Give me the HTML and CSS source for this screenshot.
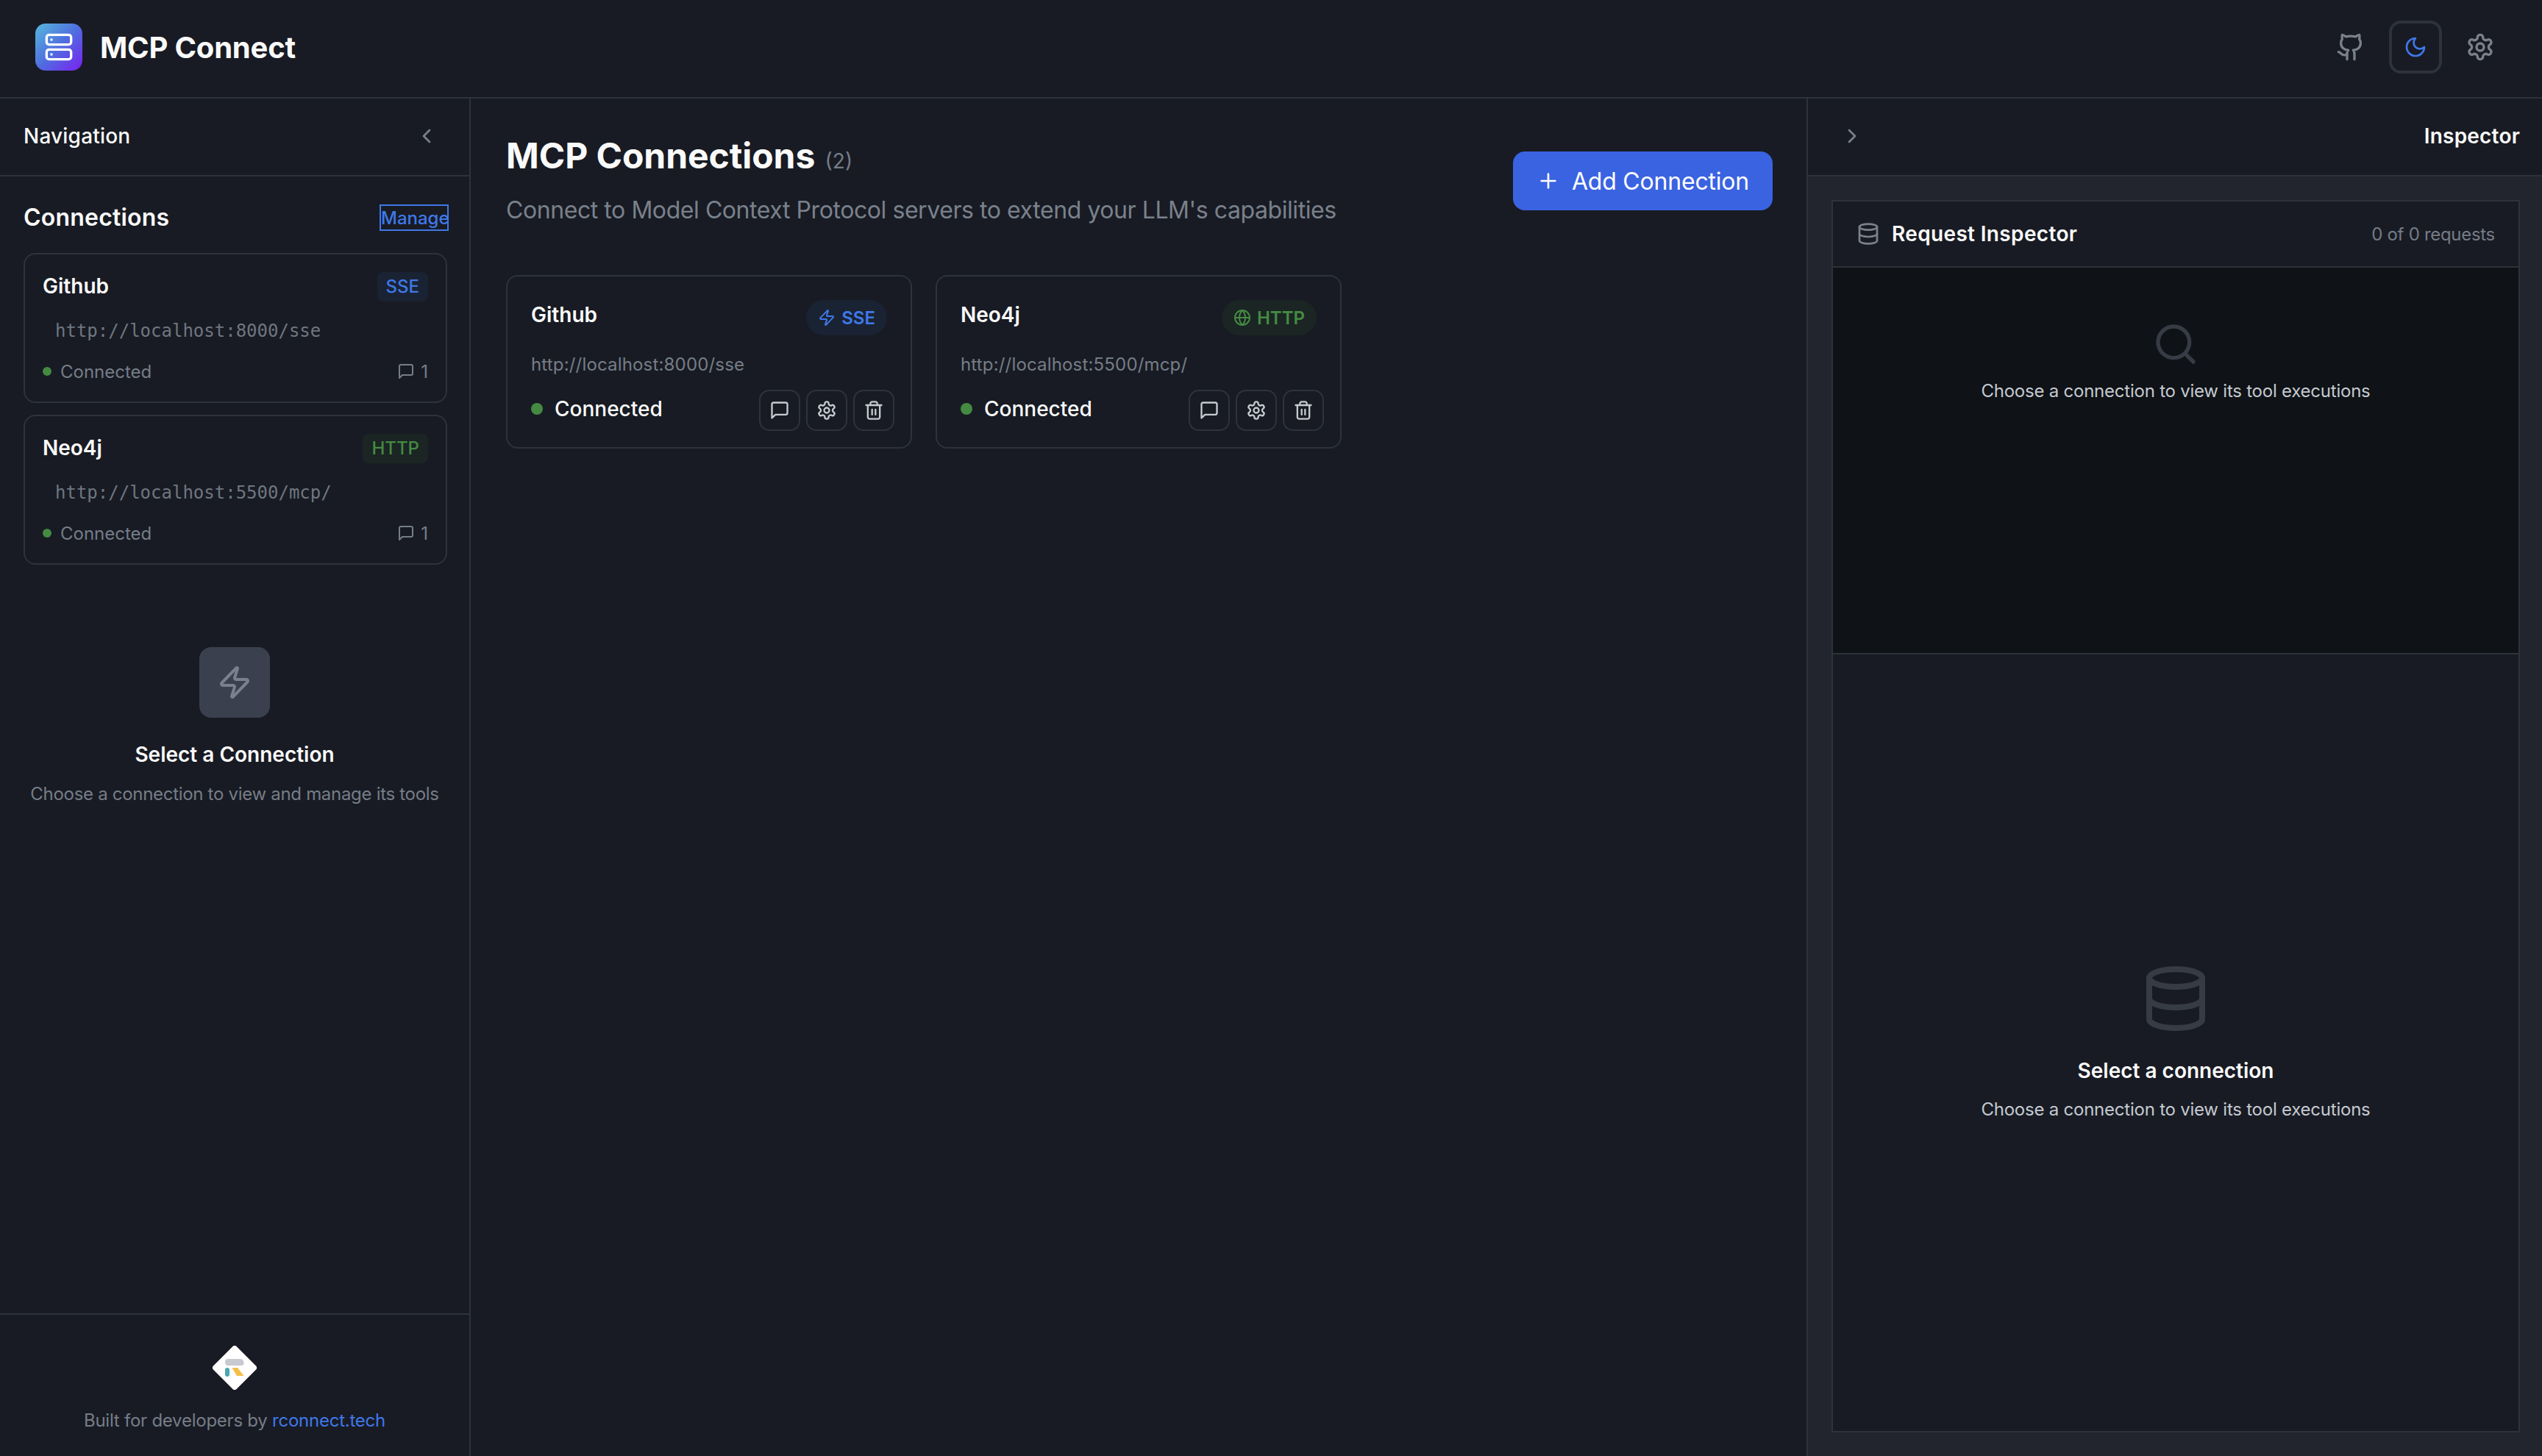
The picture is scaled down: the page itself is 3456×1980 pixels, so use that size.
FILE: index.html
```html
<!DOCTYPE html>
<html lang="en">
<head>
  <meta charset="UTF-8" />
  <meta name="viewport" content="width=device-width, initial-scale=1" />
  <title>MCP Connect</title>
  <link rel="stylesheet" href="styles.css">
</head>
<body>

<svg class="sprite" xmlns="http://www.w3.org/2000/svg">
  <symbol id="i-server" viewBox="0 0 24 24"><rect x="2" y="2" width="20" height="8" rx="2"/><rect x="2" y="14" width="20" height="8" rx="2"/><line x1="6" y1="6" x2="6.01" y2="6"/><line x1="6" y1="18" x2="6.01" y2="18"/></symbol>
  <symbol id="i-github" viewBox="0 0 24 24"><path d="M15 22v-4a4.8 4.8 0 0 0-1-3.5c3 0 6-2 6-5.5.08-1.25-.27-2.48-1-3.5.28-1.15.28-2.35 0-3.5 0 0-1 0-3 1.5-2.64-.5-5.36-.5-8 0C6 2 5 2 5 2c-.3 1.15-.3 2.35 0 3.5A5.403 5.403 0 0 0 4 9c0 3.5 3 5.5 6 5.5-.39.49-.68 1.05-.85 1.65-.17.6-.22 1.23-.15 1.85v4"/><path d="M9 18c-4.51 2-5-2-7-2"/></symbol>
  <symbol id="i-moon" viewBox="0 0 24 24"><path d="M12 3a6 6 0 0 0 9 9 9 9 0 1 1-9-9Z"/></symbol>
  <symbol id="i-gear" viewBox="0 0 24 24"><path d="M12.22 2h-.44a2 2 0 0 0-2 2v.18a2 2 0 0 1-1 1.73l-.43.25a2 2 0 0 1-2 0l-.15-.08a2 2 0 0 0-2.73.73l-.22.38a2 2 0 0 0 .73 2.73l.15.1a2 2 0 0 1 1 1.72v.51a2 2 0 0 1-1 1.74l-.15.09a2 2 0 0 0-.73 2.73l.22.38a2 2 0 0 0 2.73.73l.15-.08a2 2 0 0 1 2 0l.43.25a2 2 0 0 1 1 1.73V20a2 2 0 0 0 2 2h.44a2 2 0 0 0 2-2v-.18a2 2 0 0 1 1-1.73l.43-.25a2 2 0 0 1 2 0l.15.08a2 2 0 0 0 2.73-.73l.22-.39a2 2 0 0 0-.73-2.73l-.15-.08a2 2 0 0 1-1-1.74v-.5a2 2 0 0 1 1-1.74l.15-.09a2 2 0 0 0 .73-2.73l-.22-.38a2 2 0 0 0-2.73-.73l-.15.08a2 2 0 0 1-2 0l-.43-.25a2 2 0 0 1-1-1.73V4a2 2 0 0 0-2-2z"/><circle cx="12" cy="12" r="3"/></symbol>
  <symbol id="i-left" viewBox="0 0 24 24"><path d="m15 18-6-6 6-6"/></symbol>
  <symbol id="i-right" viewBox="0 0 24 24"><path d="m9 18 6-6-6-6"/></symbol>
  <symbol id="i-chat" viewBox="0 0 24 24"><path d="M21 15a2 2 0 0 1-2 2H7l-4 4V5a2 2 0 0 1 2-2h14a2 2 0 0 1 2 2z"/></symbol>
  <symbol id="i-trash" viewBox="0 0 24 24"><path d="M3 6h18"/><path d="M19 6v14c0 1-1 2-2 2H7c-1 0-2-1-2-2V6"/><path d="M8 6V4c0-1 1-2 2-2h4c1 0 2 1 2 2v2"/><line x1="10" y1="11" x2="10" y2="17"/><line x1="14" y1="11" x2="14" y2="17"/></symbol>
  <symbol id="i-zap" viewBox="0 0 24 24"><path d="M4 14a1 1 0 0 1-.78-1.63l9.9-10.2a.5.5 0 0 1 .86.46l-1.92 6.02A1 1 0 0 0 13 10h7a1 1 0 0 1 .78 1.63l-9.9 10.2a.5.5 0 0 1-.86-.46l1.92-6.02A1 1 0 0 0 11 14z"/></symbol>
  <symbol id="i-globe" viewBox="0 0 24 24"><circle cx="12" cy="12" r="10"/><path d="M12 2a14.5 14.5 0 0 0 0 20 14.5 14.5 0 0 0 0-20"/><path d="M2 12h20"/></symbol>
  <symbol id="i-search" viewBox="0 0 24 24"><circle cx="11" cy="11" r="8"/><path d="m21 21-4.3-4.3"/></symbol>
  <symbol id="i-db" viewBox="0 0 24 24"><ellipse cx="12" cy="5" rx="9" ry="3"/><path d="M3 5V19A9 3 0 0 0 21 19V5"/><path d="M3 12A9 3 0 0 0 21 12"/></symbol>
  <symbol id="i-plus" viewBox="0 0 24 24"><path d="M5 12h14"/><path d="M12 5v14"/></symbol>
</svg>

<div class="app">
  <header class="topbar">
    <div class="brand">
      <div class="brand-logo"><svg class="icon icon-40"><use href="#i-server"/></svg></div>
      <span class="brand-name">MCP Connect</span>
    </div>
    <div class="top-actions">
      <button class="top-btn"><svg class="icon icon-40"><use href="#i-github"/></svg></button>
      <button class="top-btn active"><svg class="icon icon-32"><use href="#i-moon"/></svg></button>
      <button class="top-btn"><svg class="icon icon-40"><use href="#i-gear"/></svg></button>
    </div>
  </header>

  <div class="columns">
    <aside class="sidebar">
      <div class="sidebar-head">
        <span class="panel-title">Navigation</span>
        <svg class="icon icon-32 muted"><use href="#i-left"/></svg>
      </div>

      <section class="conn-section">
        <div class="conn-section-head">
          <h3>Connections</h3>
          <button class="manage">Manage</button>
        </div>

        <div class="side-card">
          <div class="side-card-top">
            <span class="conn-name">Github</span>
            <span class="tag tag-sse">SSE</span>
          </div>
          <div class="side-url">http://localhost:8000/sse</div>
          <div class="side-status">
            <span class="side-state"><i class="dot dot-small"></i>Connected</span>
            <span class="side-count"><svg class="icon icon-24"><use href="#i-chat"/></svg>1</span>
          </div>
        </div>

        <div class="side-card">
          <div class="side-card-top">
            <span class="conn-name">Neo4j</span>
            <span class="tag tag-http">HTTP</span>
          </div>
          <div class="side-url">http://localhost:5500/mcp/</div>
          <div class="side-status">
            <span class="side-state"><i class="dot dot-small"></i>Connected</span>
            <span class="side-count"><svg class="icon icon-24"><use href="#i-chat"/></svg>1</span>
          </div>
        </div>
      </section>

      <div class="side-empty">
        <div class="side-empty-box"><svg class="icon icon-48"><use href="#i-zap"/></svg></div>
        <h4>Select a Connection</h4>
        <p>Choose a connection to view and manage its tools</p>
      </div>

      <footer class="side-foot">
        <svg class="foot-logo" viewBox="0 0 60 60">
          <path class="foot-diamond" d="M30 4 56 30 30 56 4 30Z"/>
          <path d="M21 18h16q5.500 0 5.500 5.500 0 3.500-3.500 3.500h-18q-4 0-4-4.500t4-4.500Z" fill="#c9cad0"/>
          <rect x="17" y="30" width="6" height="12" rx="3" fill="#4aa7ae"/>
          <path d="M26.500 30h7.500l8.500 11h-9.500Z" fill="#f6bd45"/>
        </svg>
        <p>Built for developers by <a href="#">rconnect.tech</a></p>
      </footer>
    </aside>

    <main class="content">
      <div class="content-head">
        <div>
          <h1>MCP Connections <small>(2)</small></h1>
          <p class="lead">Connect to Model Context Protocol servers to extend your LLM's capabilities</p>
        </div>
        <button class="add-btn"><svg class="icon icon-32"><use href="#i-plus"/></svg>Add Connection</button>
      </div>

      <div class="card-grid">
        <div class="card">
          <div class="card-top">
            <span class="conn-name">Github</span>
            <span class="pill pill-sse"><svg class="icon icon-24"><use href="#i-zap"/></svg>SSE</span>
          </div>
          <div class="card-url">http://localhost:8000/sse</div>
          <div class="card-bottom">
            <span class="card-state"><i class="dot"></i>Connected</span>
            <div class="card-actions">
              <button class="icon-btn"><svg class="icon icon-28"><use href="#i-chat"/></svg></button>
              <button class="icon-btn"><svg class="icon icon-28"><use href="#i-gear"/></svg></button>
              <button class="icon-btn"><svg class="icon icon-28"><use href="#i-trash"/></svg></button>
            </div>
          </div>
        </div>

        <div class="card">
          <div class="card-top">
            <span class="conn-name">Neo4j</span>
            <span class="pill pill-http"><svg class="icon icon-24"><use href="#i-globe"/></svg>HTTP</span>
          </div>
          <div class="card-url">http://localhost:5500/mcp/</div>
          <div class="card-bottom">
            <span class="card-state"><i class="dot"></i>Connected</span>
            <div class="card-actions">
              <button class="icon-btn"><svg class="icon icon-28"><use href="#i-chat"/></svg></button>
              <button class="icon-btn"><svg class="icon icon-28"><use href="#i-gear"/></svg></button>
              <button class="icon-btn"><svg class="icon icon-28"><use href="#i-trash"/></svg></button>
            </div>
          </div>
        </div>
      </div>
    </main>

    <aside class="inspector">
      <div class="inspector-head">
        <svg class="icon icon-32 muted"><use href="#i-right"/></svg>
        <span class="panel-title strong">Inspector</span>
      </div>
      <div class="inspector-body">
        <div class="box">
          <div class="box-head">
            <span class="box-title"><svg class="icon icon-32 muted"><use href="#i-db"/></svg>Request Inspector</span>
            <span class="box-count">0 of 0 requests</span>
          </div>
          <div class="box-list">
            <svg class="icon icon-64"><use href="#i-search"/></svg>
            <p>Choose a connection to view its tool executions</p>
          </div>
          <div class="box-detail">
            <svg class="icon icon-96"><use href="#i-db"/></svg>
            <h4>Select a connection</h4>
            <p>Choose a connection to view its tool executions</p>
          </div>
        </div>
      </div>
    </aside>
  </div>
</div>

</body>
</html>
```

FILE: styles.css
```css
* {
  box-sizing: border-box;
}

html, body {
  height: 100%;
  overflow: hidden;
}

body {
  margin: 0;
  background: #181b23;
  color: #fafafa;
  font-family: Inter, "Noto Sans", sans-serif;
}

h1, h3, h4, p {
  margin: 0;
}

button {
  font-family: inherit;
  background: none;
  border: none;
  padding: 0;
  color: inherit;
}

.sprite {
  display: none;
}

.icon {
  fill: none;
  stroke: currentColor;
  stroke-width: 2;
  stroke-linecap: round;
  stroke-linejoin: round;
  flex-shrink: 0;
  display: block;
}

.icon-24 { width: 24px; height: 24px; }
.icon-28 { width: 28px; height: 28px; }
.icon-32 { width: 32px; height: 32px; }
.icon-40 { width: 40px; height: 40px; }
.icon-48 { width: 48px; height: 48px; }
.icon-64 { width: 64px; height: 64px; }
.icon-96 { width: 96px; height: 96px; }

.muted {
  color: #7b818c;
}

.app {
  height: 100vh;
  display: flex;
  flex-direction: column;
  overflow: hidden;
}

/* top bar */
.topbar {
  display: flex;
  justify-content: space-between;
  align-items: center;
  padding: 28px 48px 32px;
  border-bottom: 2px solid #2e323b;
}

.brand {
  display: flex;
  align-items: center;
  gap: 24px;
}

.brand-logo {
  width: 64px;
  height: 64px;
  border-radius: 14px;
  background: linear-gradient(135deg, #56b9dc, #4f6ee0 50%, #7a20f0);
  display: flex;
  align-items: center;
  justify-content: center;
  color: #fff;
}

.brand-name {
  font-size: 40px;
  font-weight: 700;
  letter-spacing: -0.2px;
}

.top-actions {
  display: flex;
  gap: 16px;
}

.top-btn {
  width: 72px;
  height: 72px;
  border-radius: 16px;
  border: 4px solid transparent;
  color: #7b818c;
  display: flex;
  align-items: center;
  justify-content: center;
}

.top-btn.active {
  border-color: #2e323b;
  color: #3f78e8;
}

/* columns */
.columns {
  flex: 1;
  display: grid;
  grid-template-columns: 640px 1fr 998px;
  min-height: 0;
}

.sidebar {
  border-right: 2px solid #2e323b;
  display: flex;
  flex-direction: column;
}

.sidebar-head {
  height: 106px;
  padding: 0 42px 2px 32px;
  display: flex;
  justify-content: space-between;
  align-items: center;
  border-bottom: 2px solid #2e323b;
}

.panel-title {
  font-size: 28px;
  font-weight: 500;
  letter-spacing: 0.2px;
}

.panel-title.strong {
  font-weight: 600;
}

.conn-section {
  padding: 40px 30px 0 32px;
}

.conn-section-head {
  display: flex;
  justify-content: space-between;
  align-items: center;
  margin-bottom: 32px;
}

.conn-section-head h3 {
  font-size: 32px;
  font-weight: 600;
  line-height: 32px;
  letter-spacing: 0.2px;
}

.manage {
  width: 90px;
  height: 32px;
  font-size: 24px;
  font-weight: 500;
  color: #3f78e8;
  outline: 2px solid #3f78e8;
}

.side-card {
  height: 204px;
  padding: 24px;
  margin-bottom: 16px;
  border: 2px solid #2e323b;
  border-radius: 16px;
}

.side-card-top {
  display: flex;
  justify-content: space-between;
  align-items: center;
  height: 40px;
}

.conn-name {
  font-size: 28px;
  font-weight: 600;
  line-height: 40px;
}

.side-card .conn-name {
  margin-top: -2px;
}

.tag {
  height: 40px;
  line-height: 40px;
  padding: 0 12px;
  border-radius: 8px;
  font-size: 24px;
  font-weight: 500;
}

.tag-sse {
  background: #1a2333;
  color: #3f78e8;
}

.tag-http {
  background: #1b2524;
  color: #458a42;
}

.side-url {
  margin-top: 22px;
  padding-left: 17px;
  font-family: "DejaVu Sans Mono", monospace;
  font-size: 24px;
  line-height: 36px;
  color: #6f7681;
}

.side-status {
  margin-top: 21px;
  height: 32px;
  display: flex;
  justify-content: space-between;
  align-items: center;
  font-size: 24px;
  color: #767d88;
}

.side-state {
  display: flex;
  align-items: center;
  gap: 12px;
}

.side-count {
  display: flex;
  align-items: center;
  gap: 8px;
}

.dot {
  display: block;
  width: 16px;
  height: 16px;
  border-radius: 50%;
  background: #458a42;
}

.dot-small {
  width: 12px;
  height: 12px;
}

.side-empty {
  margin-top: 96px;
  text-align: center;
}

.side-empty-box {
  width: 96px;
  height: 96px;
  margin: 0 auto;
  border-radius: 16px;
  background: #3a404e;
  color: #7b818c;
  display: flex;
  align-items: center;
  justify-content: center;
}

.side-empty h4 {
  margin-top: 30px;
  font-size: 28px;
  font-weight: 600;
  line-height: 40px;
}

.side-empty p {
  margin-top: 16px;
  font-size: 24px;
  line-height: 36px;
  letter-spacing: -0.3px;
  color: #767d88;
}

.side-foot {
  margin-top: auto;
  padding-top: 42px;
  height: 194px;
  border-top: 2px solid #2e323b;
  text-align: center;
}

.foot-logo {
  display: block;
  width: 60px;
  height: 60px;
  margin: 0 auto 24px;
}

.foot-diamond {
  fill: #fff;
  stroke: #fff;
  stroke-width: 8;
  stroke-linejoin: round;
}

.side-foot p {
  font-size: 24px;
  line-height: 36px;
  letter-spacing: -0.24px;
  color: #767d88;
}

.side-foot a {
  color: #3f78e8;
  text-decoration: none;
}

/* main */
.content {
  padding: 48px;
  min-width: 0;
}

.content-head {
  display: flex;
  justify-content: space-between;
  align-items: center;
  margin-bottom: 64px;
}

.content-head h1 {
  font-size: 48px;
  font-weight: 700;
  line-height: 60px;
  height: 60px;
  letter-spacing: -0.05px;
}

.content-head small {
  margin-left: 2px;
  font-size: 28px;
  font-weight: 400;
  line-height: 1;
  letter-spacing: 0;
  color: #767d88;
}

.lead {
  margin-top: 20px;
  font-size: 32px;
  line-height: 48px;
  letter-spacing: -0.43px;
  color: #7a818c;
}

.add-btn {
  height: 80px;
  padding: 0 32px;
  border-radius: 16px;
  background: #3a63e2;
  color: #fff;
  font-size: 32px;
  font-weight: 400;
  letter-spacing: -0.2px;
  display: flex;
  align-items: center;
  gap: 16px;
}

.card-grid {
  display: grid;
  grid-template-columns: repeat(3, 552px);
  gap: 32px;
}

.card {
  height: 236px;
  padding: 32px 22px 22px 32px;
  border: 2px solid #2e323b;
  border-radius: 16px;
}

.card-top {
  display: flex;
  justify-content: space-between;
  align-items: flex-start;
}

.pill {
  height: 48px;
  margin-right: 10px;
  padding: 0 16px;
  border-radius: 24px;
  font-size: 24px;
  font-weight: 600;
  display: flex;
  align-items: center;
  gap: 8px;
}

.pill-sse {
  background: #1a2333;
  color: #3f78e8;
}

.pill-http {
  background: #1b2524;
  color: #458a42;
}

.card-url {
  margin-top: 22px;
  font-size: 24px;
  line-height: 36px;
  letter-spacing: 0.17px;
  color: #767d88;
}

.card-bottom {
  margin-top: 16px;
  display: flex;
  justify-content: space-between;
  align-items: center;
}

.card-state {
  margin-bottom: 4px;
  font-size: 28px;
  font-weight: 500;
  display: flex;
  align-items: center;
  gap: 16px;
}

.card-actions {
  display: flex;
  gap: 8px;
}

.icon-btn {
  width: 56px;
  height: 56px;
  border: 2px solid #2e323b;
  border-radius: 14px;
  color: #c5c9d0;
  display: flex;
  align-items: center;
  justify-content: center;
}

/* inspector */
.inspector {
  border-left: 2px solid #2e323b;
  margin-left: -2px;
  display: flex;
  flex-direction: column;
  min-height: 0;
}

.inspector-head {
  height: 106px;
  padding: 0 30px 2px 44px;
  display: flex;
  justify-content: space-between;
  align-items: center;
  border-bottom: 2px solid #2e323b;
}

.inspector-body {
  flex: 1;
  padding: 32px 30px 32px 32px;
  background: #22252d;
  min-height: 0;
}

.box {
  height: 100%;
  border: 2px solid #2e323b;
  background: #181b23;
  display: flex;
  flex-direction: column;
}

.box-head {
  height: 90px;
  padding: 0 32px;
  border-bottom: 2px solid #2e323b;
  display: flex;
  justify-content: space-between;
  align-items: center;
}

.box-title {
  font-size: 28px;
  font-weight: 600;
  letter-spacing: 0.35px;
  display: flex;
  align-items: center;
  gap: 16px;
}

.box-count {
  font-size: 24px;
  letter-spacing: -0.3px;
  color: #757c87;
}

.box-list {
  height: 526px;
  padding-top: 72px;
  background: #0f1216;
  border-bottom: 2px solid #2e323b;
  display: flex;
  flex-direction: column;
  align-items: center;
  color: #373b44;
}

.box-list p {
  margin-top: 14px;
  font-size: 24px;
  line-height: 36px;
  letter-spacing: -0.23px;
  color: #c4c9d1;
}

.box-detail {
  flex: 1;
  display: flex;
  flex-direction: column;
  align-items: center;
  justify-content: center;
  color: #373b44;
}

.box-detail h4 {
  margin-top: 32px;
  font-size: 28px;
  font-weight: 600;
  line-height: 36px;
  color: #fafafa;
}

.box-detail p {
  margin-top: 17px;
  font-size: 24px;
  line-height: 36px;
  letter-spacing: -0.23px;
  color: #c4c9d1;
}
```
